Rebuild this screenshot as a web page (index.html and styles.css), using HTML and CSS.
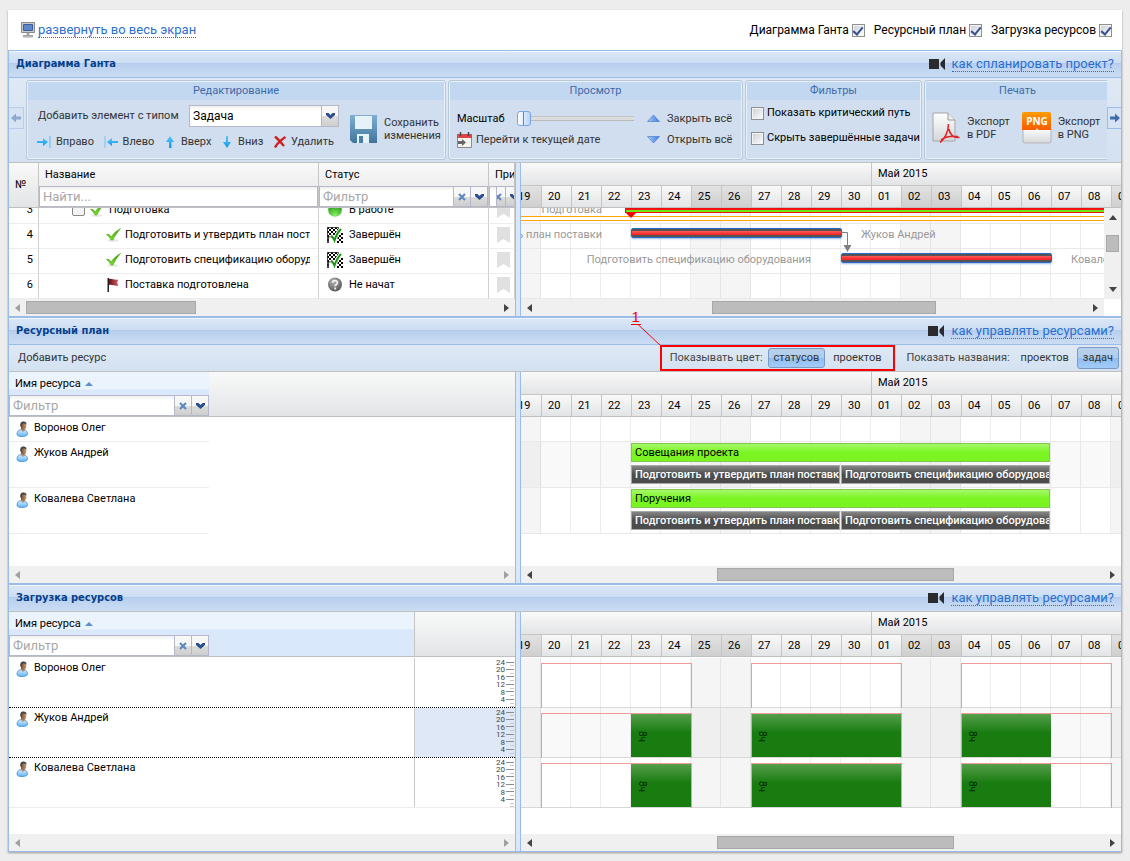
FILE: index.html
```html
<!DOCTYPE html>
<html lang="ru">
<head>
<meta charset="utf-8">
<title>Диаграмма Ганта</title>
<link rel="stylesheet" href="styles.css">
</head>
<body>
<svg class="sprite" aria-hidden="true">
  <defs>
    <linearGradient id="g-body" x1="0" y1="0" x2="0" y2="1"><stop offset="0" stop-color="#d8efff"/><stop offset="1" stop-color="#5fb2f5"/></linearGradient>
    <linearGradient id="g-face" x1="0" y1="0" x2="1" y2="0"><stop offset="0" stop-color="#6b4a34"/><stop offset="1" stop-color="#c99a70"/></linearGradient>
    <linearGradient id="g-check" x1="0" y1="0" x2="0" y2="1"><stop offset="0" stop-color="#3d9a12"/><stop offset="1" stop-color="#7fe02a"/></linearGradient>
    <linearGradient id="g-floppy" x1="0" y1="0" x2="0" y2="1"><stop offset="0" stop-color="#7fb0d2"/><stop offset="1" stop-color="#40749c"/></linearGradient>
    <linearGradient id="g-arrow" x1="0" y1="0" x2="0" y2="1"><stop offset="0" stop-color="#5cc4f8"/><stop offset="1" stop-color="#0d9bec"/></linearGradient>
    <linearGradient id="g-page" x1="0" y1="0" x2="0" y2="1"><stop offset="0" stop-color="#ffffff"/><stop offset="1" stop-color="#d4d6d8"/></linearGradient>
    <linearGradient id="g-orange" x1="0" y1="0" x2="0" y2="1"><stop offset="0" stop-color="#ff9d00"/><stop offset="1" stop-color="#f85a00"/></linearGradient>
    <linearGradient id="g-tri" x1="0" y1="0" x2="1" y2="0"><stop offset="0" stop-color="#a9cbfa"/><stop offset="1" stop-color="#3f7de0"/></linearGradient>
    <linearGradient id="g-flag" x1="0" y1="0" x2="1" y2="0"><stop offset="0" stop-color="#6e0d12"/><stop offset="1" stop-color="#d2666b"/></linearGradient>
    <radialGradient id="g-gray" cx=".4" cy=".3" r=".8"><stop offset="0" stop-color="#b5b5b5"/><stop offset="1" stop-color="#4a4a4a"/></radialGradient>
    <radialGradient id="g-green" cx=".5" cy=".9" r=".8"><stop offset="0" stop-color="#8cf06a"/><stop offset="1" stop-color="#1f9a10"/></radialGradient>
    <pattern id="p-flag" width="4" height="4" patternUnits="userSpaceOnUse"><rect width="4" height="4" fill="#fff"/><rect width="2" height="2"/><rect x="2" y="2" width="2" height="2"/></pattern>
  </defs>
  <symbol id="i-person" viewBox="0 0 12 16"><path d="M1 13c0-3 2-4.500 5-4.500s5.500 1.500 5.500 4.300c0 2-2 2.700-5.300 2.700S1 14.900 1 13z" fill="url(#g-body)" stroke="#3c8fd8" stroke-width=".8"/><path d="M5 9l2 2 2-2V7H5z" fill="#b98a62"/><ellipse cx="7.500" cy="4.800" rx="2.800" ry="4" fill="url(#g-face)"/><path d="M4.300 5C4 1.500 5.500.4 7.500.4s3.200 1 3 3.100C9 2 6.500 2.500 6 3.500L5.500 6z" fill="#454545"/></symbol>
  <symbol id="i-check" viewBox="0 0 15 15"><ellipse cx="7" cy="13.500" rx="5.500" ry="1.200" fill="#e6e6e6"/><path d="M.5 7.500c2-.6 3.200.3 4.800 2.200C7.500 6.500 10 4 14.500 1.500 11.500 5 9 8.500 7 13H5C3.800 10.500 2.300 8.500.5 7.500z" fill="url(#g-check)" stroke="#4da51d" stroke-width=".6"/></symbol>
  <symbol id="i-flag" viewBox="0 0 14 15"><path d="M1 1h1.500v14H1z" fill="#222"/><path d="M2.500 2c3-1 5 1.500 9.500.5l-1.500 3 1.500 3c-4.500 1-6.500-1.500-9.500-.5z" fill="url(#g-flag)"/></symbol>
  <symbol id="i-done" viewBox="0 0 16 16"><path d="M.5.500h11l-1 9.500h-9V16h-1z" fill="url(#p-flag)" stroke="#000" stroke-width=".7"/><path d="M12 7l4-3v12H9z" fill="url(#p-flag)"/><path d="M4 9c1.500.5 2.500 2 3.500 3.500C9 8 11 4.500 14 2" fill="none" stroke="#fff" stroke-width="3.500"/><path d="M4 9c1.500.5 2.500 2 3.500 4.500C9 8.500 11 5 14 2" fill="none" stroke="#1e9414" stroke-width="2"/></symbol>
  <symbol id="i-ball" viewBox="0 0 14 14"><circle cx="7" cy="7" r="6.800" fill="url(#g-green)"/></symbol>
  <symbol id="i-unknown" viewBox="0 0 15 15"><circle cx="7.500" cy="7.500" r="7" fill="url(#g-gray)"/><path d="M5 5.700C5.200 2.800 10 3 9.900 5.700c0 1.700-2.200 1.700-2.200 3.600M7.700 10.600v1.800" stroke="#f2f2f2" stroke-width="1.800" fill="none"/></symbol>
  <symbol id="i-mark" viewBox="0 0 13 16"><path d="M0 0h13v16l-6.500-4L0 16z" fill="#e0e0e0"/></symbol>
  <symbol id="i-camera" viewBox="0 0 17 12"><path d="M0 1h10v10H0zM16 0v12l-4.500-4.500v-3z" fill="#2b2b2d"/></symbol>
  <symbol id="i-x" viewBox="0 0 8 8"><path d="M1 1l6 6M7 1L1 7" stroke="#5a87bd" stroke-width="2"/></symbol>
  <symbol id="i-down" viewBox="0 0 9 6"><path d="M0 0h2.500l2 2 2-2H9v2L4.500 6 0 2z" fill="#2d4d8c"/></symbol>
  <symbol id="i-left" viewBox="0 0 5 8"><path d="M5 0v8L0 4z"/></symbol>
  <symbol id="i-right" viewBox="0 0 5 8"><path d="M0 0v8l5-4z"/></symbol>
  <symbol id="i-ticks" viewBox="0 0 8 50"><path d="M0 4.500h8M0 11.500h8M0 18.500h8M0 26.500h8M0 33.500h8M0 41.500h8" stroke="#8c8c8c"/><path d="M4 7.500h4M4 15.500h4M4 22.500h4M4 30.500h4M4 37.500h4M4 45.500h4M4 48.500h4" stroke="#c8c8c8"/></symbol>
</svg>

<main class="app">
  <div class="topbar">
    <a class="link fullscreen" href="#">
      <svg width="15" height="16" viewBox="0 0 15 16"><path d="M.5.500h13v10H.5z" fill="#c9c9c9" stroke="#8a8a8a"/><path d="M2.500 2.500h9v6h-9z" fill="#5c86c8" stroke="#3c5f9c"/><path d="M5.500 11h3v2h-3z" fill="#aaa"/><path d="M2.500 13.500h9v1.500h-9z" fill="#ddd" stroke="#8a8a8a" stroke-width=".8"/></svg><span>развернуть во весь экран</span></a>
    <div class="toggles">
      <label>Диаграмма Ганта <input class="check" type="checkbox" checked></label>
      <label>Ресурсный план <input class="check" type="checkbox" checked></label>
      <label>Загрузка ресурсов <input class="check" type="checkbox" checked></label>
    </div>
  </div>

  <section class="panel">
    <header class="title"><h2>Диаграмма Ганта</h2><a class="link help" href="#"><svg width="17" height="12"><use href="#i-camera"/></svg><span>как спланировать проект?</span></a></header>
    <div class="ribbon">
      <button class="scroller prev" aria-label="Назад"><svg width="10" height="10" viewBox="0 0 10 10"><path d="M0 5l5-4.500V3.500h5v3H5v3z" fill="#8ea9cd"/></svg></button>
      <div class="groups">
        <section class="group edit">
          <h3>Редактирование</h3>
          <div class="group-body">
            <div class="stack">
              <div class="line type-line"><label for="kind">Добавить элемент с типом</label><span class="combo"><select id="kind"><option>Задача</option></select><span class="trigger"><svg width="9" height="6"><use href="#i-down"/></svg></span></span></div>
              <div class="line moves">
                <button class="tool"><svg width="14" height="12" viewBox="0 0 14 12"><path d="M0 5h6V2l5 4-5 4V7H0z" fill="url(#g-arrow)"/><path d="M13 0v12" stroke="#58b8f0"/></svg>Вправо</button>
                <button class="tool"><svg width="14" height="12" viewBox="0 0 14 12"><path d="M14 5H8V2L3 6l5 4V7h6z" fill="url(#g-arrow)"/><path d="M1 0v12" stroke="#7cc4ec"/></svg>Влево</button>
                <button class="tool"><svg width="12" height="12" viewBox="0 0 12 12"><path d="M5 12V6H2l4-6 4 6H7.500v6z" fill="url(#g-arrow)"/></svg>Вверх</button>
                <button class="tool"><svg width="12" height="12" viewBox="0 0 12 12"><path d="M5 0v6H2l4 6 4-6H7V0z" fill="url(#g-arrow)"/></svg>Вниз</button>
                <button class="tool"><svg width="13" height="12" viewBox="0 0 13 12"><path d="M2 .5c3 2.500 6 6 9 9.500M12.500 1C8 4 4 7.500 2 11.500" stroke="#d02020" stroke-width="2.400" fill="none"/></svg>Удалить</button>
              </div>
            </div>
            <button class="tool big"><svg width="28" height="28" viewBox="0 0 28 28"><path d="M0 0h27v28H3l-3-3z" fill="url(#g-floppy)"/><path d="M5 1h17v13H5z" fill="#e6f1f8"/><path d="M7 19h12v9H7z" fill="#e6f1f8"/><path d="M9 21h4v7H9z" fill="#4a7fa6"/></svg><span>Сохранить<br>изменения</span></button>
          </div>
        </section>
        <section class="group view">
          <h3>Просмотр</h3>
          <div class="group-body view-grid">
            <div class="line zoom"><label for="zoom">Масштаб</label><input id="zoom" type="range" min="0" max="10" value="0"></div>
            <button class="tool"><svg width="13" height="9" viewBox="0 0 13 9"><path d="M6.500 1L12.500 7.500H.5z" fill="url(#g-tri)" stroke="#3d6fc4" stroke-width=".6"/></svg>Закрыть всё</button>
            <button class="tool date"><svg width="15" height="16" viewBox="0 0 15 16"><path d="M.5 3.500h14v12H.5z" fill="#f6f4ee" stroke="#8a8a8a"/><path d="M0 2h15v4H0z" fill="#dc4545"/><path d="M3.500 0v4M11.500 0v4" stroke="#444" stroke-width="1.500"/><path d="M1 9h4V7l4 3.500L5 14v-2H1z" fill="#666"/></svg>Перейти к текущей дате</button>
            <button class="tool"><svg width="13" height="9" viewBox="0 0 13 9"><path d="M6.500 8L.5 1.500h12z" fill="url(#g-tri)" stroke="#3d6fc4" stroke-width=".6"/></svg>Открыть всё</button>
          </div>
        </section>
        <section class="group filters">
          <h3>Фильтры</h3>
          <div class="group-body filter-list">
            <label><input class="check" type="checkbox">Показать критический путь</label>
            <label><input class="check" type="checkbox">Скрыть завершённые задачи</label>
          </div>
        </section>
        <section class="group print">
          <h3>Печать</h3>
          <div class="group-body print-list">
            <button class="tool big"><svg width="29" height="32" viewBox="0 0 29 32"><path d="M1 1h15l7 7v21H1z" fill="url(#g-page)" stroke="#a5a5a5"/><path d="M16 1v7h7" fill="#eee" stroke="#999"/><path d="M8 30.500c4-3 8.500-10 8.500-18.500M16.800 17c1 5.500 5 9.500 10.700 8.300M9 28c3-2.500 9-4.500 17-3.500" fill="none" stroke="#e02428" stroke-width="1.600"/></svg><span>Экспорт<br>в PDF</span></button>
            <button class="tool big"><svg width="30" height="32" viewBox="0 0 30 32"><path d="M1 16h28v13q0 2-2 2H3q-2 0-2-2z" fill="url(#g-page)" stroke="#b5b5b5"/><path d="M0 2q0-2 2-2h25q2 0 2 2v16H16.500L15 16l-1.500 2H0z" fill="url(#g-orange)"/><text class="png-label" x="15" y="13" text-anchor="middle">PNG</text></svg><span>Экспорт<br>в PNG</span></button>
          </div>
        </section>
      </div>
      <button class="scroller next" aria-label="Вперёд"><svg width="10" height="10" viewBox="0 0 10 10"><path d="M10 5L5 .5V3.500H0v3h5v3z" fill="#3f6cab"/></svg></button>
    </div>

    <div class="split">
      <div class="side">
        <div class="head gantt-cols">
          <div class="num">№</div>
          <div class="col"><span>Название</span><div class="filter"><input type="text" placeholder="Найти..." aria-label="Название"></div></div>
          <div class="col"><span>Статус</span><div class="filter"><input type="text" placeholder="Фильтр" aria-label="Статус"><button class="trigger clear" aria-label="Очистить"><svg width="8" height="8"><use href="#i-x"/></svg></button><button class="trigger" aria-label="Открыть"><svg width="9" height="6"><use href="#i-down"/></svg></button></div></div>
          <div class="col narrow"><span>При</span><div class="filter"><input type="text" aria-label="Приоритет"><button class="trigger clear" aria-label="Очистить"><svg width="8" height="8"><use href="#i-x"/></svg></button><button class="trigger" aria-label="Открыть"><svg width="9" height="6"><use href="#i-down"/></svg></button></div></div>
        </div>
        <div class="task-body">
          <table class="tasks">
            <colgroup><col class="c-num"><col class="c-name"><col class="c-status"><col></colgroup>
            <tr><td>3</td><td class="parent"><div class="cell"><i class="toggle"></i><svg width="15" height="15"><use href="#i-check"/></svg>Подготовка</div></td><td><div class="cell status"><svg width="16" height="14"><use href="#i-ball"/></svg>В работе</div></td><td><svg width="13" height="16"><use href="#i-mark"/></svg></td></tr>
            <tr><td>4</td><td class="child"><div class="cell"><svg width="15" height="15"><use href="#i-check"/></svg>Подготовить и утвердить план поставки</div></td><td><div class="cell status"><svg width="16" height="16"><use href="#i-done"/></svg>Завершён</div></td><td><svg width="13" height="16"><use href="#i-mark"/></svg></td></tr>
            <tr><td>5</td><td class="child"><div class="cell"><svg width="15" height="15"><use href="#i-check"/></svg>Подготовить спецификацию оборудования</div></td><td><div class="cell status"><svg width="16" height="16"><use href="#i-done"/></svg>Завершён</div></td><td><svg width="13" height="16"><use href="#i-mark"/></svg></td></tr>
            <tr><td>6</td><td class="child"><div class="cell"><svg width="15" height="15"><use href="#i-flag"/></svg>Поставка подготовлена</div></td><td><div class="cell status"><svg width="16" height="15"><use href="#i-unknown"/></svg>Не начат</div></td><td><svg width="13" height="16"><use href="#i-mark"/></svg></td></tr>
          </table>
        </div>
        <div class="hscroll"><svg class="off" width="5" height="8"><use href="#i-left"/></svg><div class="rail"><div class="thumb t-tasks"></div></div><svg width="5" height="8"><use href="#i-right"/></svg></div>
      </div>
      <div class="splitter"></div>
      <div class="time">
        <div class="scale"><div class="track"><div class="months"><span></span><span>Май 2015</span></div>
          <div class="days"><b class="we">19</b><b>20</b><b>21</b><b>22</b><b>23</b><b>24</b><b class="we">25</b><b class="we">26</b><b>27</b><b>28</b><b>29</b><b>30</b><b>01</b><b class="we">02</b><b class="we">03</b><b>04</b><b>05</b><b>06</b><b>07</b><b>08</b><b class="we">09</b></div></div></div>
        <div class="chart-row">
          <div class="chart-col">
            <div class="chart gantt-chart"><div class="track grid">
              <div class="row first"></div><div class="row"></div><div class="row"></div><div class="row"></div>
              <div class="orange"></div>
              <div class="summary"></div>
              <span class="caption before l0">Подготовка</span>
              <span class="caption before l1">Подготовить и утвердить план поставки</span>
              <span class="caption after l1">Жуков Андрей</span>
              <span class="caption before l2">Подготовить спецификацию оборудования</span>
              <span class="caption after l2">Ковалева Светлана</span>
              <div class="task r1"></div><div class="task r2"></div>
              <svg class="dep" width="12" height="22" viewBox="0 0 12 22"><path d="M0 1.500h6.500V15" fill="none" stroke="#808080"/><path d="M2.500 14h8L6.500 21z" fill="#808080"/></svg>
            </div></div>
            <div class="hscroll"><svg width="5" height="8"><use href="#i-left"/></svg><div class="rail"><div class="thumb t-gantt"></div></div><svg width="5" height="8"><use href="#i-right"/></svg></div>
          </div>
          <div class="vscroll"><svg width="8" height="5" viewBox="0 0 8 5"><path d="M0 5h8L4 0z"/></svg><div class="vthumb"></div><svg width="8" height="5" viewBox="0 0 8 5"><path d="M0 0h8L4 5z"/></svg></div>
        </div>
      </div>
    </div>
  </section>

  <section class="panel joined">
    <header class="title"><h2>Ресурсный план</h2><a class="link help" href="#"><svg width="17" height="12"><use href="#i-camera"/></svg><span>как управлять ресурсами?</span></a></header>
    <div class="toolbar">
      <button class="flat">Добавить ресурс</button>
      <div class="modes marked">
        <span>Показывать цвет:</span><button class="flat on">статусов</button><button class="flat">проектов</button>
        <svg class="leader" width="24" height="22" viewBox="0 0 24 22"><path d="M0 .500L23 22" stroke="#f00" fill="none"/></svg><span class="callout">1</span>
      </div>
      <div class="modes">
        <span>Показать названия:</span><button class="flat">проектов</button><button class="flat on tall">задач</button>
      </div>
    </div>
    <div class="split">
      <div class="side">
        <div class="head"><div class="col sorted"><span>Имя ресурса <i class="asc"></i></span><div class="filter"><input type="text" placeholder="Фильтр" aria-label="Имя ресурса"><button class="trigger clear" aria-label="Очистить"><svg width="8" height="8"><use href="#i-x"/></svg></button><button class="trigger" aria-label="Открыть"><svg width="9" height="6"><use href="#i-down"/></svg></button></div></div></div>
        <div class="plan-body people">
          <div class="person h25"><svg width="12" height="16"><use href="#i-person"/></svg>Воронов Олег</div>
          <div class="person h46"><svg width="12" height="16"><use href="#i-person"/></svg>Жуков Андрей</div>
          <div class="person h46"><svg width="12" height="16"><use href="#i-person"/></svg>Ковалева Светлана</div>
        </div>
        <div class="hscroll"><svg class="off" width="5" height="8"><use href="#i-left"/></svg><div class="rail"></div><svg class="off" width="5" height="8"><use href="#i-right"/></svg></div>
      </div>
      <div class="splitter"></div>
      <div class="time">
        <div class="scale"><div class="track"><div class="months"><span></span><span>Май 2015</span></div>
          <div class="days"><b>19</b><b>20</b><b>21</b><b>22</b><b>23</b><b>24</b><b>25</b><b>26</b><b>27</b><b>28</b><b>29</b><b>30</b><b>01</b><b>02</b><b>03</b><b>04</b><b>05</b><b>06</b><b>07</b><b>08</b><b>09</b></div></div></div>
        <div class="chart plan-body"><div class="track grid">
          <div class="row h25"></div>
          <div class="row h46 alt"><div class="bar lime" style="--start:4;--days:14">Совещания проекта</div><div class="bar dark" style="--start:4;--days:7">Подготовить и утвердить план поставки</div><div class="bar dark" style="--start:11;--days:7">Подготовить спецификацию оборудования</div></div>
          <div class="row h46"><div class="bar lime" style="--start:4;--days:14">Поручения</div><div class="bar dark" style="--start:4;--days:7">Подготовить и утвердить план поставки</div><div class="bar dark" style="--start:11;--days:7">Подготовить спецификацию оборудования</div></div>
        </div></div>
        <div class="hscroll"><svg width="5" height="8"><use href="#i-left"/></svg><div class="rail"><div class="thumb t-res"></div></div><svg width="5" height="8"><use href="#i-right"/></svg></div>
      </div>
    </div>
  </section>

  <section class="panel joined last">
    <header class="title gray"><h2>Загрузка ресурсов</h2><a class="link help" href="#"><svg width="17" height="12"><use href="#i-camera"/></svg><span>как управлять ресурсами?</span></a></header>
    <div class="split">
      <div class="side">
        <div class="head load-head"><div class="col sorted wide"><span>Имя ресурса <i class="asc"></i></span><div class="filter"><input type="text" placeholder="Фильтр" aria-label="Имя ресурса"><button class="trigger clear" aria-label="Очистить"><svg width="8" height="8"><use href="#i-x"/></svg></button><button class="trigger" aria-label="Открыть"><svg width="9" height="6"><use href="#i-down"/></svg></button></div></div></div>
        <div class="load-body">
          <div class="load"><div class="person"><svg width="12" height="16"><use href="#i-person"/></svg>Воронов Олег</div><div class="hours"><div class="nums"><span>24</span><span>20</span><span>16</span><span>12</span><span>8</span><span>4</span></div><svg width="8" height="50"><use href="#i-ticks"/></svg></div></div>
          <div class="load active"><div class="person"><svg width="12" height="16"><use href="#i-person"/></svg>Жуков Андрей</div><div class="hours"><div class="nums"><span>24</span><span>20</span><span>16</span><span>12</span><span>8</span><span>4</span></div><svg width="8" height="50"><use href="#i-ticks"/></svg></div></div>
          <div class="load"><div class="person"><svg width="12" height="16"><use href="#i-person"/></svg>Ковалева Светлана</div><div class="hours"><div class="nums"><span>24</span><span>20</span><span>16</span><span>12</span><span>8</span><span>4</span></div><svg width="8" height="50"><use href="#i-ticks"/></svg></div></div>
        </div>
        <div class="hscroll"><svg class="off" width="5" height="8"><use href="#i-left"/></svg><div class="rail"></div><svg class="off" width="5" height="8"><use href="#i-right"/></svg></div>
      </div>
      <div class="splitter"></div>
      <div class="time">
        <div class="scale"><div class="track"><div class="months"><span></span><span>Май 2015</span></div>
          <div class="days"><b class="we">19</b><b>20</b><b>21</b><b>22</b><b>23</b><b>24</b><b class="we">25</b><b class="we">26</b><b>27</b><b>28</b><b>29</b><b>30</b><b>01</b><b class="we">02</b><b class="we">03</b><b>04</b><b>05</b><b>06</b><b>07</b><b>08</b><b class="we">09</b></div></div></div>
        <div class="chart load-body"><div class="track grid">
          <div class="row h50"><div class="frame" style="--start:1;--days:5"></div><div class="frame" style="--start:8;--days:5"></div><div class="frame" style="--start:15;--days:5"></div></div>
          <div class="row h50 alt"><div class="busy" style="--start:4;--days:2">8ч</div><div class="busy" style="--start:8;--days:5">8ч</div><div class="busy" style="--start:15;--days:3">8ч</div><div class="frame" style="--start:1;--days:5"></div><div class="frame" style="--start:8;--days:5"></div><div class="frame" style="--start:15;--days:5"></div></div>
          <div class="row h50"><div class="busy" style="--start:4;--days:2">8ч</div><div class="busy" style="--start:8;--days:5">8ч</div><div class="busy" style="--start:15;--days:3">8ч</div><div class="frame" style="--start:1;--days:5"></div><div class="frame" style="--start:8;--days:5"></div><div class="frame" style="--start:15;--days:5"></div></div>
        </div></div>
        <div class="hscroll"><svg width="5" height="8"><use href="#i-left"/></svg><div class="rail"><div class="thumb t-res"></div></div><svg width="5" height="8"><use href="#i-right"/></svg></div>
      </div>
    </div>
  </section>
</main>
</body>
</html>
```
FILE: styles.css
```css
* { box-sizing: border-box; }
body {
  margin: 0;
  padding: 10px 8px 9px;
  background: #ededed;
  color: #000;
  font: 11px/14px Roboto, "Liberation Sans", sans-serif;
}
button, input, select { font: inherit; color: inherit; }
button { margin: 0; padding: 0; border: 0; background: none; cursor: pointer; white-space: nowrap; }
h2, h3 { margin: 0; font-size: 11px; }
svg { flex: none; display: block; }
.sprite { position: absolute; width: 0; height: 0; }

.app { background: #fff; box-shadow: 0 1px 2px rgba(0, 0, 0, .35); }

.topbar { display: flex; align-items: center; justify-content: space-between; height: 40px; padding: 0 10px 0 13px; }
.link { display: flex; align-items: center; color: #2a6fd0; text-decoration: none; font-size: 13px; line-height: 15px; }
.link span { border-bottom: 1px dotted #2a6fd0; }
.fullscreen { gap: 2px; }
.help { gap: 6px; }
.toggles { display: flex; gap: 9px; font-size: 12px; }
.toggles label { display: flex; align-items: center; gap: 3px; }

.check {
  appearance: none;
  flex: none;
  width: 13px;
  height: 13px;
  margin: 0;
  border: 1px solid #8e8f8f;
  background: linear-gradient(135deg, #c9cdd3, #fff);
  box-shadow: inset 0 0 0 1px #f4f4f4;
}
.check:checked::after {
  content: "";
  display: block;
  width: 4px;
  height: 8px;
  margin: 0 auto;
  border: solid #3a4f8f;
  border-width: 0 2px 2px 0;
  transform: rotate(40deg);
}

.panel { border: solid #99bce8; border-width: 1px 1px 0; }
.panel.joined { border-top-width: 2px; }
.panel.last { border-bottom-width: 1px; }
.title {
  display: flex;
  align-items: center;
  justify-content: space-between;
  height: 27px;
  padding: 0 7px;
  border-bottom: 1px solid #99bce8;
  background: linear-gradient(#dae7f6, #cddef3 45%, #abc7ec 46%, #b8cfee 50%, #cbddf3);
  box-shadow: inset 0 1px #f0f6fc;
}
.title.gray { border-bottom-color: #c0c0c0; }
.title h2 { color: #04408c; font-family: "DejaVu Sans Condensed", sans-serif; font-weight: bold; }

.ribbon { display: flex; align-items: center; height: 85px; background: linear-gradient(#dfe9f5, #d3e1f1); border-bottom: 1px solid #c0c0c0; }
.scroller { display: flex; align-items: center; justify-content: center; width: 15px; height: 22px; margin-bottom: 4px; border: 1px solid #99bce8; background: #d5e3f5; flex: none; }
.scroller.prev { border-left: 0; border-color: #b6cdeb; margin-right: 2px; }
.scroller.next { border-right: 0; width: 14px; }
.groups { display: flex; flex: 1; min-width: 0; gap: 2px; overflow: hidden; }
.group { flex: none; height: 80px; padding: 1px; border: 1px solid #b7c8d7; border-radius: 3px; background: #d0def0; box-shadow: inset 0 0 0 1px #e8f1fb; }
.edit { width: 420px; }
.view { width: 295px; }
.filters { width: 177px; }
.print { width: 187px; }
.group h3 { height: 18px; background: #c2d8f0; color: #3e6aaa; font-weight: normal; line-height: 18px; text-align: center; }
.group-body { display: flex; padding: 5px 9px 0; color: #333; }
.line { display: flex; align-items: center; }
.type-line { justify-content: space-between; height: 22px; padding-left: 1px; }
.stack { display: flex; flex: none; flex-direction: column; gap: 7px; width: 302px; }
.combo { position: relative; display: flex; width: 150px; height: 22px; border: 1px solid #b5b8c8; background: #fff; }
.combo select { appearance: none; flex: 1; border: 0; padding: 0 3px; background: linear-gradient(#eee, #fff 4px); color: #000; font-size: 12px; }
.trigger { display: flex; align-items: center; justify-content: center; flex: none; width: 17px; border-left: 1px solid #b5b8c8; background: linear-gradient(#f7f7f7 50%, #dcdcdc 51%, #cfcfcf); }
.moves { justify-content: space-between; height: 16px; width: 297px; }
.tool { display: flex; align-items: center; gap: 5px; text-align: left; color: #333; }
.big { gap: 6px; line-height: 13px; }
.edit .big { margin: 2px 0 0 11px; }
.png-label { font: bold 10px "Open Sans", sans-serif; fill: #fff; }
.view-grid { display: grid; grid-template-columns: 190px 1fr; grid-auto-rows: 21px; padding: 8px 7px 0; }
.zoom { justify-content: space-between; padding-right: 12px; color: #000; }
.zoom input { appearance: none; width: 118px; height: 16px; margin: 0; background: linear-gradient(#c4c4c4 1px, #dcdcdc 1px 4px, #b8b8b8 4px) center / 116px 5px no-repeat; }
.zoom input::-webkit-slider-thumb { appearance: none; width: 14px; height: 15px; border: 1px solid #7aa7e0; border-radius: 3px; background: linear-gradient(90deg, transparent 5px, #5d86c4 5px 6px, transparent 6px), linear-gradient(90deg, #fff, #b5d3fa); }
.view-grid .tool { gap: 7px; }
.view-grid .date { gap: 4px; }
.filter-list { flex-direction: column; gap: 11px; padding: 6px 4px 0; color: #000; white-space: nowrap; }
.filter-list label { display: flex; align-items: center; gap: 3px; }
.print-list { gap: 12px; padding: 12px 6px 0; }

.split { display: flex; }
.side { flex: 0 0 506px; min-width: 0; overflow: hidden; }
.splitter { flex: none; width: 6px; border: solid #99bce8; border-width: 0 1px; background: #d9e7f8; }
.time { flex: 1; min-width: 0; }

.head { display: flex; height: 45px; border-bottom: 1px solid #c0c0c0; background: linear-gradient(#f9f9f9, #e3e4e6); }
.gantt-cols { display: grid; grid-template-columns: 30px 280px 170px 26px; }
.num { padding: 15px 0 0 6px; border-right: 1px solid #c5c5c5; }
.col { min-width: 0; border-right: 1px solid #c5c5c5; overflow: hidden; }
.col > span { display: flex; align-items: center; gap: 4px; height: 23px; padding-left: 6px; }
.filter { display: flex; height: 21px; border: 1px solid #b5b8c8; background: #fff; }
.filter input { flex: 1; min-width: 0; width: 0; border: 0; padding: 0 3px; background: linear-gradient(#eee, #fff 4px); font-size: 13px; outline: 0; }
.filter input::placeholder { color: #a8a8a8; }
.narrow .filter { margin-right: -8px; }
.narrow .clear { width: 9px; justify-content: flex-end; padding-right: 3px; overflow: hidden; }
.sorted { width: 200px; border-right: 0; background: linear-gradient(#ebf3fd 17px, #d9e8fb 18px); }
.sorted .filter { width: 200px; }
.sorted.wide { width: 406px; border-right: 1px solid #c5c5c5; }
.asc { border: solid transparent; border-width: 0 4px 4px; border-bottom-color: #5d8fce; }

.task-body { height: 91px; overflow: hidden; }
.tasks { width: 100%; margin-top: -9px; border-collapse: separate; border-spacing: 0; table-layout: fixed; }
.c-num { width: 30px; }
.c-name { width: 280px; }
.c-status { width: 170px; }
.tasks td { height: 25px; padding: 0 8px 3px; border: solid #ededed; border-width: 0 0 1px; border-right: 1px solid #d0d0d0; overflow: hidden; white-space: nowrap; }
.tasks td:first-child { padding: 0 5px 3px; text-align: right; }
.tasks .parent { padding-left: 33px; }
.tasks .child { padding-left: 67px; }
.cell { display: flex; align-items: center; gap: 4px; overflow: hidden; }
.cell.status { gap: 6px; }
.toggle { width: 13px; height: 13px; margin-right: 1px; border: 1px solid #888; border-radius: 2px; background: #f4f4f4; }

.hscroll { display: flex; align-items: center; height: 17px; padding: 0 6px; background: #f0f0f0; fill: #444; }
.hscroll .off { fill: #a0a0a0; }
.rail { flex: 1; }
.thumb { height: 13px; border: 1px solid #a8a8a8; background: #bcbcbc; }
.t-tasks { width: 170px; margin-left: 6px; }
.t-gantt { width: 40%; margin-left: 32%; }
.t-res { width: 41%; margin-left: 32%; }
.vscroll { display: flex; flex-direction: column; align-items: center; width: 17px; height: 91px; padding: 7px 0; background: #f0f0f0; fill: #444; }
.vthumb { width: 13px; height: 17px; margin: 15px 0 auto; border: 1px solid #a8a8a8; background: #bcbcbc; }

.scale { height: 45px; overflow: hidden; border-bottom: 1px solid #c0c0c0; background: linear-gradient(#f9f9f9, #e3e4e6) 0 0 / 100% 22px no-repeat; }
.track { position: relative; min-width: 630px; margin-left: -10px; }
.months { display: grid; grid-template-columns: 360px 1fr; height: 23px; border-bottom: 1px solid #c5c5c5; }
.months span { padding: 4px 6px 0; }
.months span + span { border-left: 1px solid #c5c5c5; }
.days { display: flex; height: 21px; background: linear-gradient(#f9f9f9, #e3e4e6); }
.days b { flex: none; width: 30px; padding-left: 6px; border-left: 1px solid #c5c5c5; font-weight: normal; line-height: 22px; }
.days .we { background: linear-gradient(#e2e2e2, #cfcfcf); }

.chart-row { display: flex; }
.chart-col { flex: 1; min-width: 0; }
.chart { overflow: hidden; }
.gantt-chart { height: 91px; }
.grid { --cell: 30px; }
.row { position: relative; height: 25px; border-bottom: 1px solid #e9e9e9; background: repeating-linear-gradient(90deg, transparent 0 29px, rgba(0, 0, 0, .07) 29px 30px), linear-gradient(90deg, rgba(0, 0, 0, .04) 30px, transparent 30px 180px, rgba(0, 0, 0, .04) 180px) 0 0 / 210px 100%; }
.row.alt { background-color: #f9f9f9; }
.row.first { height: 16px; }
.h25 { height: 25px; }
.h46 { height: 46px; }
.row.h46 { height: 46px; }
.row.h50 { height: 50px; border-bottom-color: #d8d8d8; }
.orange { position: absolute; top: 8px; left: 0; right: 0; height: 5px; border: solid #ffa500; border-width: 1px 0; background: #fff; }
.summary { position: absolute; top: 0; left: 114px; right: 0; height: 5px; border: solid #f01010; border-width: 2px 0 1px 1px; background: #70e810; }
.summary::after { content: ""; position: absolute; top: 3px; left: 0; border: solid transparent; border-width: 5px 5px 0; border-top-color: #f00000; }
.caption { position: absolute; color: #999; white-space: nowrap; }
.before.l0 { right: calc(100% - 91px); }
.before.l1 { right: calc(100% - 91px); }
.before.l2 { right: calc(100% - 300px); }
.after.l1 { left: 350px; }
.after.l2 { left: 560px; }
.l0 { top: -5px; }
.l1 { top: 20px; }
.l2 { top: 45px; }
.task { position: absolute; left: 120px; width: 211px; height: 10px; border: 1px solid #2a68c8; border-radius: 2px; background: linear-gradient(#555 2px, #ff5a5a 2px, #f02020 6px, #555 6px); box-shadow: 0 1px 2px rgba(60, 120, 210, .5); }
.r1 { top: 20px; }
.r2 { top: 45px; left: 330px; }
.dep { position: absolute; top: 23px; left: 330px; }

.toolbar { display: flex; align-items: center; height: 27px; border-bottom: 1px solid #c0c0c0; background: linear-gradient(#dfe9f5, #d3e1f1); color: #333; padding: 0 2px 0 8px; }
.toolbar > .flat { margin-right: auto; padding: 0; }
.modes { display: flex; align-items: center; gap: 2px; color: #444; padding-left: 11px; }
.modes span { margin-right: 3px; white-space: nowrap; }
.flat { height: 20px; padding: 0 5px; border: 1px solid transparent; border-radius: 3px; color: #333; }
.flat.on { border-color: #7a9ac4; background: linear-gradient(#b8d0ea, #b0cdef 50%, #8fbef2 51%, #a2cbf8); }
.flat.tall { height: 22px; }
.marked { position: relative; height: 26px; padding: 0 6px 0 8px; border: 2px solid #f00; }
.leader { position: absolute; top: -23px; left: -24px; }
.modes .callout { position: absolute; top: -37px; left: -31px; width: 10px; margin: 0; border-bottom: 1px solid #f00; color: #f00; font: 15px/14px "Liberation Sans", sans-serif; text-align: center; }

.plan-body { height: 149px; }
.person { display: flex; align-items: flex-start; gap: 6px; padding: 4px 7px 0; line-height: 14px; }
.people .person { width: 200px; border-bottom: 1px solid #ededed; }
.bar { position: absolute; top: 1px; left: calc(var(--start) * var(--cell)); width: calc(var(--days) * var(--cell) - 1px); height: 19px; padding: 0 3px; border: 1px solid #a8a8a8; overflow: hidden; white-space: nowrap; line-height: 18px; }
.lime { background: linear-gradient(#a5f96a, #7bf522 50%); border-color: #80c850; }
.dark { top: 23px; background: linear-gradient(#858585, #4c4c4c 50%); color: #fff; font-weight: 500; }

.load-body { height: 177px; padding-top: 1px; }
.load { display: flex; height: 50px; border-bottom: 1px solid #ededed; }
.load:first-child, .load.active { border-bottom: 1px dotted #000; }
.load .person { width: 406px; border-right: 1px solid #c8c8c8; padding-top: 3px; }
.hours { flex: 1; display: flex; justify-content: flex-end; gap: 1px; padding-right: 1px; overflow: hidden; }
.active .hours { background: #dfe8f6; }
.nums { display: flex; flex-direction: column; justify-content: space-between; height: 45px; padding-top: 1px; color: #444; font-size: 8px; line-height: 7px; text-align: right; }
.frame, .busy { position: absolute; top: 5px; bottom: -1px; left: calc(var(--start) * var(--cell)); width: calc(var(--days) * var(--cell) + 1px); }
.frame { border: 1px solid #f09a9a; border-bottom: 0; }
.busy { display: flex; flex-direction: column; justify-content: flex-end; bottom: 0; width: calc(var(--days) * var(--cell)); padding: 18px 0 0 6px; background: linear-gradient(#5aa04e, #187c10 45%); color: #062a04; font-size: 10px; line-height: 10px; writing-mode: vertical-rl; }
```
